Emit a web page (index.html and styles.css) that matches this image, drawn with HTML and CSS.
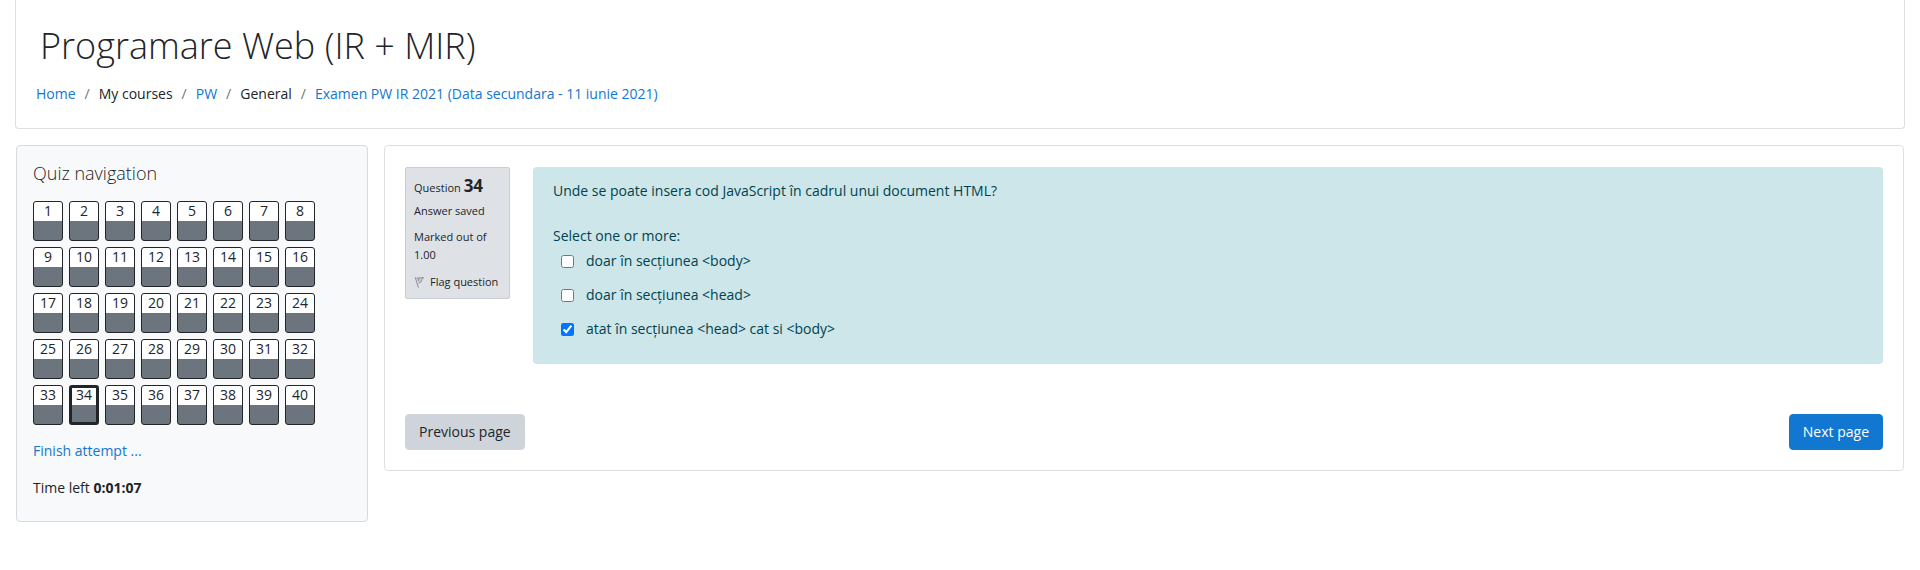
FILE: index.html
```html
<!DOCTYPE html>
<html lang="ro">
<head>
<meta charset="utf-8">
<title>Programare Web (IR + MIR)</title>
<link rel="stylesheet" href="styles.css">
</head>
<body>
<header class="page-header">
  <h1 class="page-title">Programare Web (IR + MIR)</h1>
  <nav aria-label="Breadcrumb">
    <ol class="breadcrumb">
      <li><a href="#">Home</a></li>
      <li>My courses</li>
      <li><a href="#">PW</a></li>
      <li>General</li>
      <li><a href="#">Examen PW IR 2021 (Data secundara - 11 iunie 2021)</a></li>
    </ol>
  </nav>
</header>
<div class="columns">
  <aside class="card quiz-nav">
    <h2 class="quiz-nav-title">Quiz navigation</h2>
    <div class="question-grid">
      <a class="qn" href="#">1</a><a class="qn" href="#">2</a><a class="qn" href="#">3</a><a class="qn" href="#">4</a><a class="qn" href="#">5</a><a class="qn" href="#">6</a><a class="qn" href="#">7</a><a class="qn" href="#">8</a>
      <a class="qn" href="#">9</a><a class="qn" href="#">10</a><a class="qn" href="#">11</a><a class="qn" href="#">12</a><a class="qn" href="#">13</a><a class="qn" href="#">14</a><a class="qn" href="#">15</a><a class="qn" href="#">16</a>
      <a class="qn" href="#">17</a><a class="qn" href="#">18</a><a class="qn" href="#">19</a><a class="qn" href="#">20</a><a class="qn" href="#">21</a><a class="qn" href="#">22</a><a class="qn" href="#">23</a><a class="qn" href="#">24</a>
      <a class="qn" href="#">25</a><a class="qn" href="#">26</a><a class="qn" href="#">27</a><a class="qn" href="#">28</a><a class="qn" href="#">29</a><a class="qn" href="#">30</a><a class="qn" href="#">31</a><a class="qn" href="#">32</a>
      <a class="qn" href="#">33</a><a class="qn current" href="#" aria-current="page">34</a><a class="qn" href="#">35</a><a class="qn" href="#">36</a><a class="qn" href="#">37</a><a class="qn" href="#">38</a><a class="qn" href="#">39</a><a class="qn" href="#">40</a>
    </div>
    <a class="finish" href="#">Finish attempt ...</a>
    <div class="timer">Time left <strong>0:01:07</strong></div>
  </aside>
  <main class="card attempt">
    <div class="question">
      <section class="info">
        <h3 class="info-number">Question <strong>34</strong></h3>
        <div class="info-line">Answer saved</div>
        <div class="info-line">Marked out of 1.00</div>
        <a class="flag" href="#">
          <svg class="flag-icon" viewBox="0 0 12 12" aria-hidden="true">
            <path class="cloth" d="M2.4 2.2 9.8 1.6 7.2 4 7.2 5.8 4.6 7.2"/>
            <path class="pole" d="M1.2 1.2 4.4 11.6"/>
            <path class="fold" d="M4.8 2.4 4.4 5"/>
          </svg>
          <span>Flag question</span>
        </a>
      </section>
      <form class="formulation">
        <p class="prompt">Unde se poate insera cod JavaScript în cadrul unui document HTML?</p>
        <fieldset class="answers">
          <legend>Select one or more:</legend>
          <label class="answer"><input type="checkbox"><span>doar în secțiunea &lt;body&gt;</span></label>
          <label class="answer"><input type="checkbox"><span>doar în secțiunea &lt;head&gt;</span></label>
          <label class="answer"><input type="checkbox" checked><span>atat în secțiunea &lt;head&gt; cat si &lt;body&gt;</span></label>
        </fieldset>
      </form>
    </div>
    <div class="actions">
      <button class="btn secondary" type="button">Previous page</button>
      <button class="btn primary" type="button">Next page</button>
    </div>
  </main>
</div>
</body>
</html>
```
FILE: styles.css
```css
* { box-sizing: border-box; }
body {
  margin: 0;
  padding: 0 15px;
  background: #fff;
  color: #212529;
  font: 14px/22px "Open Sans", "Noto Sans", sans-serif;
}
a { color: #1177d1; text-decoration: none; }
strong { font-weight: 700; }
.page-header {
  padding: 22px 20px 23px;
  border: 1px solid #dfdfdf;
  border-top: 0;
  border-radius: 0 0 4px 4px;
}
.page-title {
  margin: 0 0 13px;
  padding-left: 4px;
  font-size: 36px;
  font-weight: 300;
  line-height: 48px;
}
.breadcrumb {
  display: flex;
  margin: 0;
  padding: 0;
  list-style: none;
}
.breadcrumb li + li::before {
  content: "/";
  padding: 0 9px;
  color: #6c757d;
}
.columns {
  display: grid;
  grid-template-columns: 352px 1fr;
  align-items: start;
  gap: 16px;
  padding: 16px 1px;
}
.card { border: 1px solid #dfdfdf; border-radius: 4px; }
.quiz-nav {
  padding: 14px 16px 22px;
  background: #f8f9fa;
  border-color: #d6d9dd;
}
.quiz-nav-title {
  margin: 0 0 15px;
  font-size: 18px;
  font-weight: 300;
  line-height: 26px;
}
.question-grid {
  display: grid;
  grid-template-columns: repeat(8, 30px);
  gap: 6px;
}
.qn {
  height: 40px;
  border: 1px solid #212529;
  border-radius: 3px;
  background: linear-gradient(#fff 50%, #6c757d 50%) border-box;
  color: #212529;
  font-size: 14px;
  line-height: 18px;
  text-align: center;
}
.qn.current { border-width: 3px; line-height: 14px; }
.finish { display: block; margin-top: 15px; }
.timer { margin-top: 15px; }
.attempt { padding: 21px 20px 20px; }
.question {
  display: grid;
  grid-template-columns: 105px 1fr;
  align-items: start;
  gap: 23px;
}
.info {
  padding: 8px 8px 7px;
  border: 1px solid #caced4;
  border-radius: 2px;
  background: #dee2e6;
  font-size: 11px;
  line-height: 18px;
}
.info-number { margin: 0 0 4px; font-size: 11px; font-weight: 400; line-height: 20px; }
.info-number strong { font-size: 17px; }
.info-line { margin-bottom: 8px; }
.flag { display: flex; align-items: center; gap: 4px; padding-top: 1px; color: #212529; white-space: nowrap; }
.flag-icon { width: 12px; height: 12px; fill: none; stroke: #8c8f92; stroke-width: 1; }
.flag-icon .cloth { fill: #cdcfd1; }
.formulation {
  padding: 13px 20px 15px;
  border-radius: 4px;
  background: #cde6ea;
  color: #00434e;
}
.prompt { margin: 0 0 23px; }
.answers { margin: 0; padding: 0; border: 0; }
.answers legend { padding: 0; }
.answer { display: flex; align-items: center; padding: 3px 0 9px; }
.answer input { width: 13px; height: 13px; margin: 0 12px 0 8px; accent-color: #0075ff; }
.actions { display: flex; justify-content: space-between; margin-top: 50px; }
.btn {
  height: 36px;
  padding: 0 13px;
  border: 1px solid;
  border-radius: 4px;
  font: inherit;
}
.btn.secondary { border-color: #ced4da; background: #ced4da; color: #212529; }
.btn.primary { border-color: #1177d1; background: #1177d1; color: #fff; }
```
